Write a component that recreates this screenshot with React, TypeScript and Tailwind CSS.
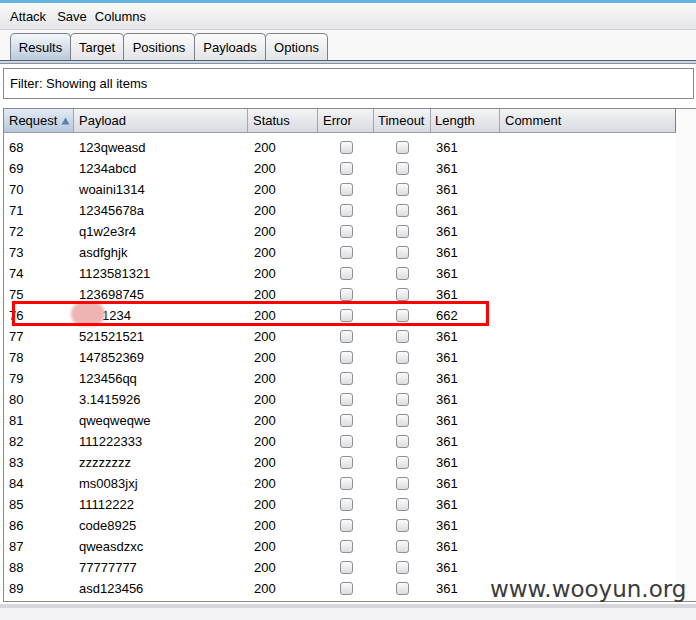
import React from "react";

const rows: [number, string, number][] = [
  [68, "123qweasd", 361],
  [69, "1234abcd", 361],
  [70, "woaini1314", 361],
  [71, "12345678a", 361],
  [72, "q1w2e3r4", 361],
  [73, "asdfghjk", 361],
  [74, "1123581321", 361],
  [75, "123698745", 361],
  [76, "1234", 662],
  [77, "521521521", 361],
  [78, "147852369", 361],
  [79, "123456qq", 361],
  [80, "3.1415926", 361],
  [81, "qweqweqwe", 361],
  [82, "111222333", 361],
  [83, "zzzzzzzz", 361],
  [84, "ms0083jxj", 361],
  [85, "11112222", 361],
  [86, "code8925", 361],
  [87, "qweasdzxc", 361],
  [88, "77777777", 361],
  [89, "asd123456", 361],
];

const tabs = [
  { label: "Results", w: "w-[61px]", active: true },
  { label: "Target", w: "w-[54px]" },
  { label: "Positions", w: "w-[72px]" },
  { label: "Payloads", w: "w-[72px]" },
  { label: "Options", w: "w-[63px]" },
];

function Check() {
  return (
    <span className="inline-block w-[13px] h-[13px] rounded-[3px] border border-[#8c9096] bg-gradient-to-b from-[#fbfbfb] to-[#dcdde0]" />
  );
}

export default function App() {
  return (
    <div className="relative w-[696px] h-[620px] overflow-hidden bg-[#f6f6f6] text-[13px] text-black font-['Liberation_Sans',Arial,sans-serif]">
      <div className="h-[3px] bg-[#64b2e2]" />

      {/* menu */}
      <div className="h-[27px] flex items-center pt-[2px] pl-[10px] bg-gradient-to-b from-[#fafafa] to-[#e5e6ea] border-b border-[#d4d4d8]">
        <span className="mr-[11px]">Attack</span>
        <span className="mr-[8px]">Save</span>
        <span>Columns</span>
      </div>

      {/* tabs */}
      <div className="h-[30px] flex items-end pl-[10px] bg-[#f8f8f8]">
        {tabs.map((t) => (
          <div
            key={t.label}
            className={`${t.w} h-[27px] flex items-center justify-center pt-[2px] border border-b-0 border-[#7d8088] rounded-t-[5px] -ml-px first:ml-0 ${
              t.active
                ? "bg-gradient-to-b from-[#f4f7fa] to-[#b9cadb]"
                : "bg-gradient-to-b from-[#fbfbfb] to-[#e3e4e8]"
            }`}
          >
            {t.label}
          </div>
        ))}
      </div>
      <div className="h-px bg-[#5c6068]" />
      <div className="h-[2px] bg-[#c7d7e8]" />
      <div className="h-px bg-[#8a8e96]" />

      {/* filter */}
      <div className="bg-white pt-[4px] pl-[3px] pr-[2px]">
        <div className="h-[31px] flex items-center pl-[6px] border border-[#8a8a8e] bg-white">
          Filter: Showing all items
        </div>
      </div>

      {/* table */}
      <div className="bg-white pt-[9px] pl-[3px]">
        <div className="h-[494px] flex border-y border-l border-[#8a8a8e] bg-[#fafafa]">
          <div className="w-[672px] bg-white flex flex-col">
            <div className="h-[24px] flex border-b border-[#9a9ca4] bg-gradient-to-b from-[#f3f4f6] to-[#d9dbe1]">
              <div className="w-[70px] flex items-center pl-[5px] border-r border-[#a4a6ae] bg-gradient-to-b from-[#e2ebf4] to-[#b5c8dc]">
                Request
                <svg width="9" height="8" viewBox="0 0 9 8" className="ml-[4px]">
                  <path d="M4.5 0.5 L8.5 7.5 L0.5 7.5 Z" fill="#5d82ab" />
                </svg>
              </div>
              <div className="w-[174px] flex items-center pl-[5px] border-r border-[#a4a6ae]">Payload</div>
              <div className="w-[70px] flex items-center pl-[5px] border-r border-[#a4a6ae]">Status</div>
              <div className="w-[56px] flex items-center pl-[5px] border-r border-[#a4a6ae]">Error</div>
              <div className="w-[57px] flex items-center pl-[4px] border-r border-[#a4a6ae]">Timeout</div>
              <div className="w-[69px] flex items-center pl-[4px] border-r border-[#a4a6ae]">Length</div>
              <div className="w-[176px] flex items-center pl-[5px] border-r border-[#7a7c84]">Comment</div>
            </div>
            <div className="pt-[4px]">
              {rows.map(([n, p, len]) => (
                <div key={n} className="relative h-[21px] flex items-center">
                  <div className="w-[70px] pl-[5px]">{n}</div>
                  <div className="w-[174px] pl-[5px]">
                    {n === 76 ? <span className="pl-[23px]">{p}</span> : p}
                  </div>
                  <div className="w-[70px] pl-[6px]">200</div>
                  <div className="w-[56px] flex justify-center pl-[1px]">
                    <Check />
                  </div>
                  <div className="w-[57px] flex justify-center">
                    <Check />
                  </div>
                  <div className="w-[69px] pl-[5px]">{len}</div>
                  <div className="w-[176px]" />
                  {n === 76 && (
                    <>
                      <div className="absolute left-[67px] -top-[3px] w-[34px] h-[24px] rounded-full bg-[#eeb4b4] blur-[1.5px]" />
                      <div className="absolute left-[8px] -top-[4px] w-[477px] h-[25px] border-[3px] border-[#ff0000]" />
                    </>
                  )}
                </div>
              ))}
            </div>
          </div>
        </div>
      </div>

      {/* bottom */}
      <div className="h-[2px] bg-white" />
      <div className="h-[4px] bg-[#d6d7dc]" />
      <div className="h-[20px] bg-[#f3f3f5]" />

      <div className="absolute left-[490px] top-[578px] text-[23px] leading-none text-[#3b3b3b] font-['DejaVu_Sans',Verdana,sans-serif]">
        www.wooyun.org
      </div>
    </div>
  );
}
